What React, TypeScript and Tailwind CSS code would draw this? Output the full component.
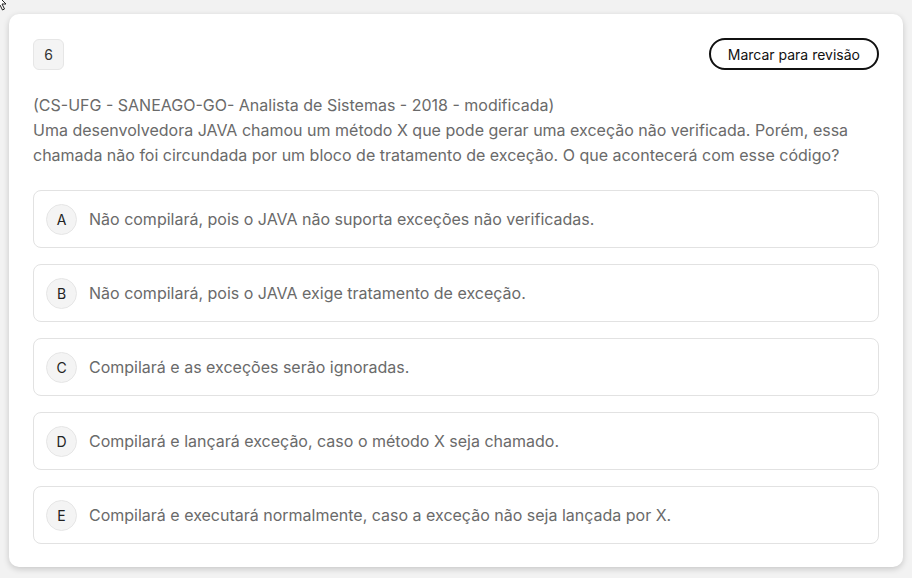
import React from "react";

const options = [
  { l: "A", t: "Não compilará, pois o JAVA não suporta exceções não verificadas." },
  { l: "B", t: "Não compilará, pois o JAVA exige tratamento de exceção." },
  { l: "C", t: "Compilará e as exceções serão ignoradas." },
  { l: "D", t: "Compilará e lançará exceção, caso o método X seja chamado." },
  { l: "E", t: "Compilará e executará normalmente, caso a exceção não seja lançada por X." },
];

export default function App() {
  return (
    <div
      className="relative w-[912px] h-[578px] bg-[#f2f2f2] pt-[14px] pl-[9px] overflow-hidden"
      style={{ fontFamily: "Inter, 'Noto Sans', sans-serif" }}
    >
      <svg className="absolute left-[-4px] top-[-6px]" width="12" height="18" viewBox="0 0 12 18">
        <path d="M1 1 L1 14 L4 11 L6.5 16 L8.5 15 L6 10 L10 10 Z" fill="#fff" stroke="#222" strokeWidth="1" />
      </svg>
      <div className="w-[894px] h-[553px] bg-white rounded-[10px] shadow-[0_2px_6px_rgba(0,0,0,0.18)] px-[24px] pt-[24px]">
        <div className="flex items-center justify-between">
          <div className="w-[31px] h-[31px] rounded-[6px] bg-[#f4f4f4] border border-[#e6e6e6] flex items-center justify-center text-[14px] text-[#333]">
            6
          </div>
          <button className="h-[32px] px-[17px] rounded-full border-2 border-[#111] text-[14px] text-[#111] bg-white">
            Marcar para revisão
          </button>
        </div>
        <div className="mt-[23px] text-[16px] leading-[25px] text-[#6a6a6a]">
          <p>(CS-UFG - SANEAGO-GO- Analista de Sistemas - 2018 - modificada)</p>
          <p>
            Uma desenvolvedora JAVA chamou um método X que pode gerar uma exceção não verificada. Porém, essa
            chamada não foi circundada por um bloco de tratamento de exceção. O que acontecerá com esse código?
          </p>
        </div>
        <div className="mt-[22px] flex flex-col gap-[16px]">
          {options.map((o) => (
            <div
              key={o.l}
              className="h-[58px] rounded-[8px] border border-[#e2e2e2] flex items-center pl-[12px]"
            >
              <div className="w-[31px] h-[31px] rounded-full bg-[#f4f4f4] border border-[#e6e6e6] flex items-center justify-center text-[14px] text-[#222] shrink-0">
                {o.l}
              </div>
              <span className="ml-[12px] text-[16px] text-[#6a6a6a]">{o.t}</span>
            </div>
          ))}
        </div>
      </div>
    </div>
  );
}
